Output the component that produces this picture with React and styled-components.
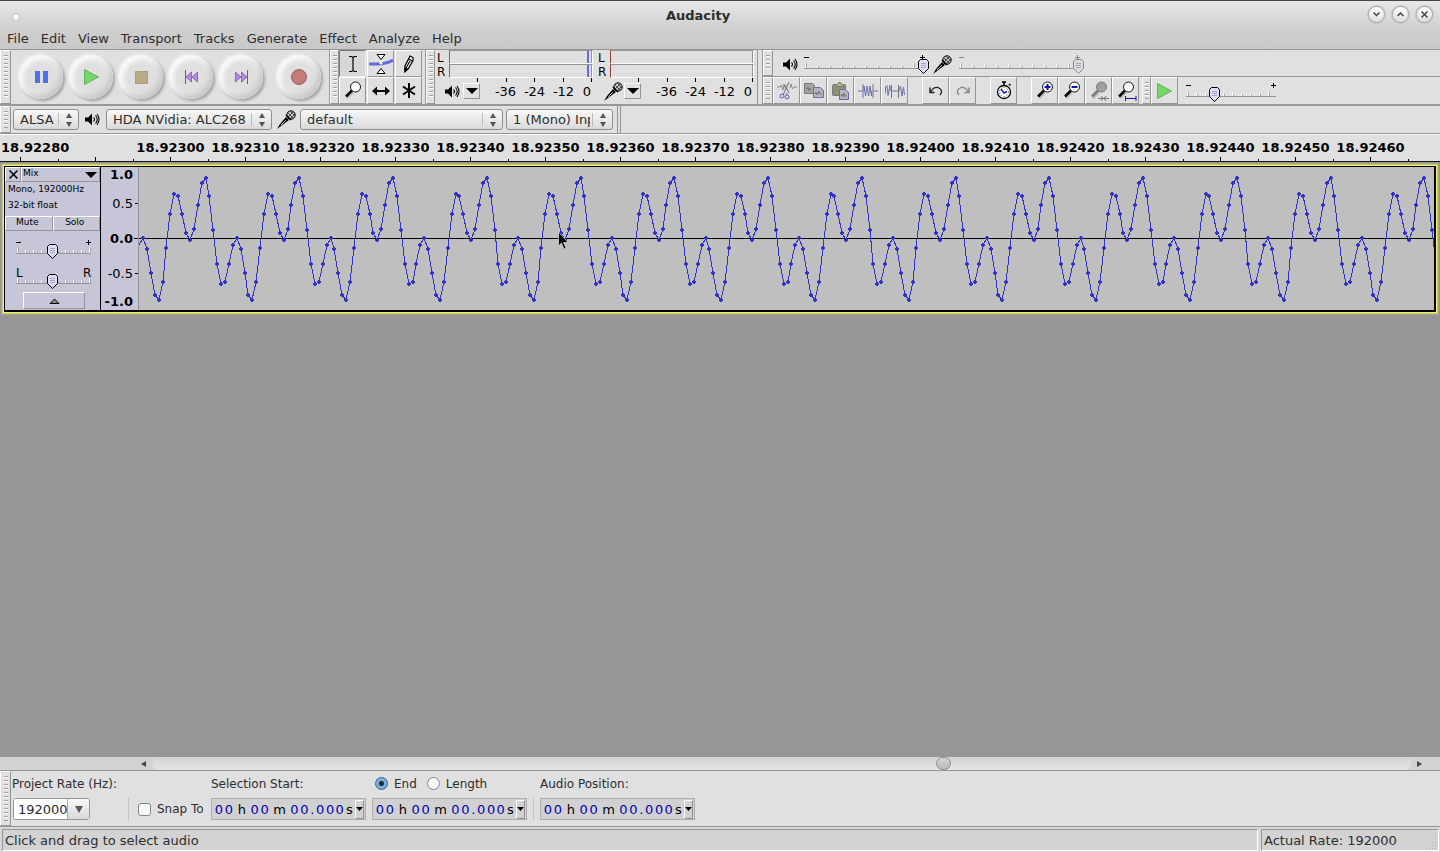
import React from "react";
import styled, { createGlobalStyle, css } from "styled-components";

const GlobalStyle = createGlobalStyle`
  * { box-sizing: border-box; }
  html, body { margin: 0; padding: 0; }
  body, button, input, select {
    font-family: "DejaVu Sans", sans-serif;
    font-size: 13px;
    color: #2d2d2d;
  }
  button { margin: 0; padding: 0; border: 0; background: none; }
  svg { display: block; flex: none; }
`;

const menus = ["File", "Edit", "View", "Transport", "Tracks", "Generate", "Effect", "Analyze", "Help"];

const times = [
  "18.92300", "18.92310", "18.92320", "18.92330", "18.92340", "18.92350",
  "18.92360", "18.92370", "18.92380", "18.92390", "18.92400", "18.92410",
  "18.92420", "18.92430", "18.92440", "18.92450", "18.92460",
];

// one period of the wave, 24 samples, as heights in the track
const period = [
  71, 82, 106, 128, 133, 115, 81, 47, 27, 29, 47, 66,
  73, 62, 38, 16, 11, 29, 63, 97, 117, 115, 97, 78,
];
const samples = Array.from({ length: 800 }, (_, i) => [
  Math.round(4 + i * 3.90625),
  period[i % 24],
]);

/* ---------- icons ---------- */

const Speaker = () => (
  <svg width="15" height="13" viewBox="0 0 15 13" fill="none" stroke="#000">
    <path d="M0 4.5h3l4-4v12l-4-4H0z" fill="#000" stroke="none" />
    <path d="M8.5 4.5q2 2 0 4M10.5 2.5q3.5 4 0 8M12 1q4 5.5 0 11" strokeWidth="1.1" />
  </svg>
);

const Mic = () => (
  <svg width="19" height="19" viewBox="0 0 19 19">
    <path d="M9 7L3 14l-3 5 4-3 8-6z" fill="#000" />
    <path d="M9 10l-5 5" stroke="#bbb" />
    <circle cx="14" cy="5" r="4.2" fill="#c4c4c4" stroke="#000" />
    <path d="M11 3l5 5M13 1l5 5M11 7l5-5M13 9l5-5" stroke="#333" strokeWidth=".8" />
    <path d="M9 5l5 5" stroke="#000" strokeWidth="1.6" />
  </svg>
);

const Magnifier = ({ sign, gray, span, blueSpan }) => (
  <svg width="24" height="24" viewBox="0 0 24 24" fill="none">
    <path d="M12 13.5l-6 6" stroke="#888" strokeWidth="2" opacity=".4" />
    <path d="M11 11.5l-6 6" stroke={gray ? "#777" : "#000"} strokeWidth="2.5" />
    <circle cx="14.5" cy="8" r="5" fill={gray ? "#a0a0a0" : "#fff"} stroke={gray ? "#777" : "#111"} />
    {sign && <path d={sign === "+" ? "M11.5 8h6M14.5 5v6" : "M11.5 8h6"} stroke="#1414a8" strokeWidth="2" />}
    {span && <path d="M11 19.5h11M14 17l2 2.5-2 2.5M19 17l-2 2.5 2 2.5" stroke="#777" />}
    {blueSpan && <path d="M11 19.5h11M11.5 17v5M22 17v5" stroke="#1414a8" />}
  </svg>
);

const IBeam = () => (
  <svg width="12" height="18" viewBox="0 0 12 18" fill="none" stroke="#000">
    <path d="M2 1.5h2.5l1.5 1 1.5-1H10M2 16.5h2.5l1.5-1 1.5 1H10M6 2v14" strokeWidth="1.2" />
  </svg>
);

const Envelope = () => (
  <svg width="24" height="22" viewBox="0 0 24 22">
    <path d="M0 11h9q8 0 15-4" stroke="#6468dc" strokeWidth="3" fill="none" />
    <circle cx="12" cy="10" r="1.5" fill="#fff" />
    <path d="M8 1.5h8l-4 5zM8 20.500h8l-4-5z" fill="#fff" stroke="#000" />
  </svg>
);

const Pencil = () => (
  <svg width="12" height="18" viewBox="0 0 12 18">
    <path d="M7 1l3 1.500v3L5 14l-3 2.500V11z" fill="#fff" stroke="#000" strokeWidth="1.2" />
    <path d="M2 16.500V13l2 1zM6 4l3 2M7 6l-4 7" stroke="#000" strokeWidth="1.2" />
  </svg>
);

const TimeShift = () => (
  <svg width="18" height="10" viewBox="0 0 18 10">
    <path d="M0 5l5-4.500v9zM18 5l-5-4.500v9z" />
    <path d="M3 5h12" stroke="#000" strokeWidth="2" />
  </svg>
);

const Star = () => (
  <svg width="14" height="15" viewBox="0 0 14 15" stroke="#000" strokeWidth="2">
    <path d="M7 0v15M1 3.5l12 8M13 3.5l-12 8" />
  </svg>
);

const Cut = () => (
  <svg width="20" height="18" viewBox="0 0 20 18" fill="none" stroke="#888">
    <path d="M0 5h3l1-2 2 5 1-6 1.500 5 1.500-3M13 6l1-4 1.500 5L17 5h3" />
    <path d="M12 0L7 11M8 3l4 8" strokeWidth="1.3" />
    <g stroke="#5e64a8">
      <circle cx="5" cy="14" r="2" />
      <circle cx="10" cy="15" r="2" />
      <path d="M7 11l-1 2M10 11v2" />
    </g>
  </svg>
);

const Copy = () => (
  <svg width="20" height="16" viewBox="0 0 20 16" fill="#a4a4a4">
    <path d="M.5.5h8l2 2v8H.5z" stroke="#777" />
    <path d="M2 6h1l1-2 1 4 1-3 1 2" fill="none" stroke="#777" />
    <path d="M9.5 4.5h7l3 3v7h-10z" fill="#b5b5bd" stroke="#676cae" />
    <path d="M11 11l1-2 1 3 2-4 1 3h2" fill="none" stroke="#777" />
  </svg>
);

const Paste = () => (
  <svg width="18" height="18" viewBox="0 0 18 18">
    <rect x=".5" y="2.5" width="13" height="11" rx="1" fill="#929074" stroke="#777" />
    <path d="M3.5 4.5v-2h2l1-2h2l1 2h2v2z" fill="#b8b68a" stroke="#777" />
    <path d="M7.5 7.5h6l3 3v7h-9z" fill="#b5b5bd" stroke="#676cae" />
    <path d="M9 14l1-2 1 3 1-4 1 3h2" fill="none" stroke="#777" />
  </svg>
);

const Trim = () => (
  <svg width="20" height="16" viewBox="0 0 20 16" fill="none" stroke="#6a70b4">
    <path d="M0 8h5M15 8h5" />
    <path d="M6 8V3l1.500 10L9 3l1.500 10L12 3l1.500 10V8" />
    <path d="M5 1v14M15 1v14" stroke="#777" />
  </svg>
);

const Silence = () => (
  <svg width="20" height="16" viewBox="0 0 20 16" fill="none" stroke="#6a70b4">
    <path d="M.5 10V4L2 2.5l1 10 2-10V8M7 8h6M14 8l1.500-5 1.500 10 1.500-9 1 8" />
    <path d="M6.5 2v13M13.5 2v13" stroke="#777" />
  </svg>
);

const Undo = ({ flip }) => (
  <svg width="14" height="11" viewBox="0 0 14 11" fill="none" stroke={flip ? "#888" : "#222"} transform={flip ? "scale(-1 1)" : undefined}>
    <path d="M2 7q2-5 7-4.500 6 2.500 2 7.500" strokeWidth="1.3" />
    <path d="M1 2.5v5h4.500" strokeWidth="1.5" />
  </svg>
);

const Timer = () => (
  <svg width="16" height="19" viewBox="0 0 16 19" fill="none" stroke="#000">
    <path d="M6 1h4M8 1v3M13 3l1.500 1.500" strokeWidth="1.5" />
    <circle cx="8" cy="11" r="6.5" fill="#fff" strokeWidth="1.3" />
    <circle cx="8" cy="11" r="4.5" strokeDasharray="1 2" strokeWidth=".8" />
    <path d="M5 8l3 4 3-1.500" stroke="#2020b0" strokeWidth="1.5" />
  </svg>
);

const PlayIcon = () => (
  <svg width="15" height="16" viewBox="0 0 15 16">
    <path d="M.5.5l14 7.500-14 7.500z" fill="#75d767" stroke="#63b358" />
  </svg>
);

const PauseIcon = () => (
  <svg width="13" height="12" viewBox="0 0 13 12" fill="#4d6ff2">
    <path d="M0 0h5v12H0zM8 0h5v12H8z" />
  </svg>
);

const StopIcon = () => (
  <svg width="13" height="13" viewBox="0 0 13 13">
    <path d="M.5.5h12v12H.5z" fill="#baab84" stroke="#ae9e78" />
  </svg>
);

const SkipIcon = ({ flip }) => (
  <svg width="13" height="14" viewBox="0 0 13 14" transform={flip ? "scale(-1 1)" : undefined}>
    <path d="M6.5 2v10L1 7zM12.5 2v10L7 7z" fill="#b48be0" stroke="#8757b5" strokeWidth=".8" />
    <path d="M.5 0v14" stroke="#71548d" />
  </svg>
);

const RecordIcon = () => (
  <svg width="16" height="16" viewBox="0 0 16 16">
    <circle cx="8" cy="8" r="7.5" fill="#c47b7b" stroke="#9b5c5c" />
  </svg>
);

const Spinner = () => (
  <svg width="6" height="16" viewBox="0 0 6 16" fill="#555">
    <path d="M0 6l3-5 3 5zM0 10l3 5 3-5z" />
  </svg>
);

const DownArrow = ({ w = 12, h = 6, fill = "#000" }) => (
  <svg width={w} height={h} viewBox="0 0 12 6" preserveAspectRatio="none" fill={fill}>
    <path d="M0 0h12L6 6z" />
  </svg>
);

/* ---------- shared parts ---------- */

const Window = styled.div`
  display: flex;
  flex-direction: column;
  min-height: 100vh;
  background: #e0e0e0;
`;

const TitleBar = styled.header`
  display: flex;
  align-items: center;
  height: 28px;
  padding: 0 7px 0 12px;
  border-top: 1px solid #45434a;
  background: linear-gradient(#e8e8e8, #d0d0d0);
`;

const Dot = styled.span`
  width: 8px;
  height: 8px;
  margin: 4px 8px 0 0;
  border: 1px solid #c2c2c2;
  border-radius: 50%;
  background: #f8f8f8;
`;

const Title = styled.h1`
  flex: 1;
  margin: 0;
  padding-top: 2px;
  font-size: 13px;
  text-align: center;
`;

const WindowButtons = styled.div`
  display: flex;
  gap: 7px;
`;

const WindowButton = styled.button`
  display: grid;
  place-items: center;
  width: 17px;
  height: 17px;
  border: 1px solid #a9a9a9;
  border-radius: 50%;
  background: linear-gradient(#fff, #dcdcdc);
  box-shadow: 0 0 0 1px #c4c4c4;
`;

const MenuBar = styled.nav`
  display: flex;
  gap: 12px;
  height: 22px;
  padding: 0 7px;
  border-bottom: 1px solid #949494;
  background: linear-gradient(#d0d0d0, #c8c8c8);
`;

const bevel = css`
  border: 1px solid;
  border-color: #fff #959595 #959595 #fff;
`;

const Grip = styled.div`
  display: flex;
  justify-content: center;
  width: ${({ $w }) => $w || 9}px;
  padding: 4px 0;
  ${bevel}
  &::after {
    content: "";
    width: 4px;
    background: repeating-linear-gradient(#a0a0a0 0 1px, #fff 1px 2px, transparent 2px 4px);
  }
`;

const Dock = styled.div`
  display: flex;
  height: 56px;
  border-bottom: 2px solid #979797;
`;

const Bar = styled.div`
  display: flex;
  border-right: ${({ $end }) => ($end ? 0 : 1)}px solid #959595;
`;

const TransportButtons = styled.div`
  display: flex;
  align-items: center;
  width: 318px;
  padding: 0 8px;
  gap: 6px;
`;

const RoundButton = styled.button`
  display: grid;
  place-items: center;
  width: 44px;
  height: 44px;
  border-radius: 50%;
  margin-left: ${({ $gap }) => $gap || 0}px;
  background: #e0e0e0;
  box-shadow:
    inset 3px 3px 4px #fafafa,
    inset -4px -4px 5px #c9c9c9,
    inset 0 0 3px 6px #e9e9e9,
    2px 2px 3px #a2a2a2,
    -1px -1px 3px #f6f6f6;
`;

const ToolGrid = styled.div`
  display: grid;
  grid-template: repeat(2, 27px) / repeat(3, 28px);
  width: 86px;
`;

const SquareButton = styled.button`
  display: grid;
  place-items: center;
  width: 27px;
  height: 27px;
  ${bevel}
  ${({ $active }) => $active && "border-color: #777 #eee #eee #777; background: #d8d8d8;"}
  margin-right: ${({ $gap }) => $gap || 0}px;
`;

/* ---------- meters ---------- */

const MeterBox = styled.div`
  width: 161px;
  padding-left: 2px;
`;

const Channel = styled.div`
  display: flex;
  height: 14px;
  line-height: 16px;
  font-size: 12px;
  color: #000;
`;

const ChannelName = styled.span`
  width: 12px;
`;

const Level = styled.div`
  display: flex;
  justify-content: flex-end;
  width: 144px;
  border: 1px solid;
  border-color: #959595 #fff #fff ${({ $color }) => $color};
  &::before {
    content: "";
    width: 2px;
    background: ${({ $peak }) => ($peak ? "#6868f4" : "transparent")};
  }
  &::after {
    content: "";
    width: 1px;
    margin-left: 2px;
    background: #959595;
  }
`;

const MeterTicks = styled.div`
  display: flex;
  justify-content: space-between;
  width: 115px;
  height: 4px;
  margin-left: 40px;
  i { width: 1px; background: #000; }
`;

const MeterScale = styled.div`
  display: flex;
  align-items: center;
  height: 18px;
  padding-left: 4px;
  color: #000;
`;

const MeterIcon = styled.span`
  display: grid;
  place-items: center;
  width: 22px;
`;

const MeterMenu = styled.button`
  display: grid;
  place-items: center;
  width: 17px;
  height: 16px;
  margin-right: 11px;
  ${bevel}
`;

const Db = styled.span`
  width: 29px;
  text-align: center;
  &:last-child { width: 18px; }
`;

const Meter = ({ label, icon, color, peak }) => (
  <MeterBox>
    <Channel><ChannelName>L</ChannelName><Level $color={color} $peak={peak} /></Channel>
    <Channel><ChannelName>R</ChannelName><Level $color={color} $peak={peak} /></Channel>
    <MeterTicks><i /><i /><i /><i /><i /></MeterTicks>
    <MeterScale>
      <MeterIcon>{icon}</MeterIcon>
      <MeterMenu aria-label={label}><DownArrow /></MeterMenu>
      <Db>-36</Db><Db>-24</Db><Db>-12</Db><Db>0</Db>
    </MeterScale>
  </MeterBox>
);

/* ---------- sliders ---------- */

const thumb = (fill, stroke) =>
  `url("data:image/svg+xml,${encodeURIComponent(
    `<svg xmlns='http://www.w3.org/2000/svg' width='11' height='15'><path d='M2.5.5h6l2 2v7l-5 5-5-5v-7z' fill='${fill}' stroke='${stroke}'/><path d='M3 4.5h5M3 6.5h5M3 8.5h5' stroke='#a4a4c0'/></svg>`
  )}")`;

const SliderBox = styled.label`
  display: grid;
  width: ${({ $w }) => $w}px;
  height: 20px;
  svg, input { grid-area: 1 / 1; }
  svg { overflow: visible; }
`;

const Range = styled.input`
  appearance: none;
  width: 100%;
  height: 15px;
  margin: 5px 0 0;
  background: none;
  &::-webkit-slider-thumb {
    appearance: none;
    width: 11px;
    height: 15px;
    background: ${({ disabled }) => (disabled ? thumb("#dcdcdc", "#888") : thumb("#dcdcf4", "#000"))};
  }
`;

const Slider = ({ label, w, step, value, disabled, left, right }) => {
  const ink = disabled ? "#888" : "#000";
  const ticks = [];
  for (let x = 5; x <= w - 5; x += step) ticks.push(x);
  return (
    <SliderBox $w={w}>
      <svg width={w} height="20">
        {ticks.map((x, i) => (
          <path key={x} d={`M${x + 0.5} ${i === 0 || i === ticks.length - 1 ? 9 : 11}V14`} stroke="#fff" />
        ))}
        {ticks.map((x, i) => (
          <path key={x} d={`M${x + 1.5} ${i === 0 || i === ticks.length - 1 ? 9 : 12}V14`} stroke="#aaa" />
        ))}
        <path d={`M4 14.500H${w - 4}`} stroke="#959595" />
        {left ? (
          <>
            <text x="4" y="8" fontSize="12">{left}</text>
            <text x={w - 12} y="8" fontSize="12">{right}</text>
          </>
        ) : (
          <path d={`M4 3.5h5M${w - 9} 3.5h5M${w - 6.5} 1v5`} stroke={ink} />
        )}
      </svg>
      <Range type="range" aria-label={label} defaultValue={value} disabled={disabled} />
    </SliderBox>
  );
};

const RightDock = styled.div`
  display: grid;
  grid-template-rows: 27px 27px;
  flex: 1;
  margin-left: 4px;
  border-left: 1px solid #959595;
`;

const MixerBar = styled(Bar)`
  align-items: stretch;
  border-bottom: 1px solid #959595;
`;

const MixerContent = styled.div`
  display: flex;
  align-items: center;
  padding: 2px 0 0 8px;
`;

const MixerIcon = styled.span`
  display: grid;
  justify-content: center;
  width: ${({ $w }) => $w}px;
`;

const PlaySpeed = styled.div`
  padding-top: 5px;
  margin-left: 4px;
`;

/* ---------- device bar ---------- */

const DeviceDock = styled.div`
  display: flex;
  height: 28px;
  border-bottom: 1px solid #959595;
`;

const Devices = styled.div`
  display: flex;
  align-items: center;
  padding: 0 4px 0 2px;
  border-right: 1px solid #959595;
`;

const DockEnd = styled.div`
  width: 3px;
  border-right: 1px solid #959595;
`;

const SelectBox = styled.label`
  display: grid;
  align-items: center;
  width: ${({ $w }) => $w}px;
  height: 21px;
  margin-right: ${({ $gap }) => $gap || 0}px;
  svg {
    grid-area: 1 / 1;
    justify-self: end;
    margin-right: 7px;
    pointer-events: none;
  }
`;

const NativeSelect = styled.select`
  grid-area: 1 / 1;
  appearance: none;
  width: 100%;
  height: 21px;
  padding: 0 22px 0 6px;
  border: 1px solid #8f8f8f;
  border-radius: 3px;
  background:
    linear-gradient(#bbb, #bbb) right 19px center / 1px 13px no-repeat,
    linear-gradient(#f8f8f8, #dadada);
`;

const DeviceIcon = styled.span`
  display: grid;
  place-items: center;
  width: ${({ $w }) => $w}px;
`;

const Select = ({ label, w, gap, children }) => (
  <SelectBox $w={w} $gap={gap}>
    <NativeSelect aria-label={label}><option>{children}</option></NativeSelect>
    <Spinner />
  </SelectBox>
);

/* ---------- ruler and track ---------- */

const Ruler = styled.div`
  display: flex;
  height: 28px;
  overflow: hidden;
  padding-top: 5px;
  border-top: 1px solid #fff;
  border-bottom: 1px solid #111;
  background:
    linear-gradient(90deg, #000 1px, transparent 1px) 20px 100% / 75px 4px repeat-x,
    linear-gradient(90deg, #000 1px, transparent 1px) 58px 100% / 75px 2px repeat-x,
    #e0e0e0;
  color: #000;
  font-weight: bold;
`;

const RulerLabel = styled.span`
  flex: none;
  width: 75px;
  text-align: center;
  &:first-child {
    width: 133px;
    padding-left: 1px;
    text-align: left;
  }
`;

const Workspace = styled.main`
  flex: 1;
  padding: 4px 4px 0;
  background: #969696;
`;

const Track = styled.section`
  display: flex;
  height: 146px;
  border: solid #000;
  border-width: 1px 2px 2px 1px;
  box-shadow: 0 0 0 1px #f2f26c, 0 0 0 2px #c6c673, 0 0 0 3px #a5a58a;
`;

const TrackPanel = styled.div`
  width: 96px;
  border-right: 1px solid #000;
  background: #c6c6d8;
  color: #000;
  font-size: 9px;
`;

const TrackHead = styled.div`
  display: flex;
  height: 15px;
`;

const PanelButton = styled.button`
  display: flex;
  align-items: center;
  justify-content: ${({ $between }) => ($between ? "space-between" : "center")};
  flex: ${({ $w }) => ($w ? "none" : 1)};
  width: ${({ $w }) => $w || 0}px;
  height: 15px;
  padding: 0 ${({ $between }) => ($between ? 2 : 0)}px;
  color: #000;
  font-size: 9px;
  ${bevel}
  span { padding: 0 2px 4px 0; margin-left: -1px; }
`;

const TrackInfo = styled.p`
  height: 35px;
  margin: -1px 0 0;
  padding-left: 3px;
  line-height: 16px;
`;

const TrackSliders = styled.div`
  display: flex;
  flex-direction: column;
  align-items: center;
  gap: 10px;
  padding: 8px 0 3px 1px;
`;

const Collapse = styled.button`
  display: grid;
  place-items: center;
  width: 62px;
  height: 17px;
  margin-left: 18px;
  ${bevel}
`;

const VRuler = styled.div`
  display: grid;
  grid-template-rows: 14px 45px 25px 44px 12px;
  align-items: center;
  justify-items: end;
  width: 38px;
  padding-right: 5px;
  border-right: 1px solid #959595;
  background:
    linear-gradient(#000, #000) 100% 36px / 3px 1px no-repeat,
    linear-gradient(#000, #000) 100% 71px / 4px 1px no-repeat,
    linear-gradient(#000, #000) 100% 106px / 3px 1px no-repeat,
    #c6c6d8;
  color: #000;
`;

const WaveBox = styled.div`
  position: relative;
  flex: 1;
  min-width: 0;
  overflow: hidden;
  background: #bfbfbf;
`;

const Cursor = styled.svg`
  position: absolute;
  left: 419px;
  top: 64px;
`;

const Wave = () => (
  <WaveBox>
    <svg width="3130" height="143" shapeRendering="crispEdges">
      <path d="M0 71.500H3130" stroke="#000" />
      <path d={`M0 78L${samples.map(([x, y]) => `${x} ${y}`).join("L")}`} fill="none" stroke="#3232c8" />
      {samples.map(([x, y]) => (
        <path key={x} d={`M${x - 2} ${y - 1}h4v2h-4zM${x - 1} ${y - 2}h2v4h-2z`} fill="#3232c8" />
      ))}
    </svg>
    <Cursor width="12" height="19" viewBox="0 0 12 19">
      <path d="M.5 1v14l3-3 2.500 6 2-1-2.500-5.500H10z" fill="#000" stroke="#eee" strokeWidth=".6" />
    </Cursor>
  </WaveBox>
);

/* ---------- bottom ---------- */

const ScrollRow = styled.div`
  display: flex;
  align-items: center;
  height: 14px;
  padding: 0 15px 0 138px;
  border-bottom: 1px solid #959595;
  background: #d2d2d2;
`;

const ScrollButton = styled.button`
  display: grid;
  place-items: center;
  width: 11px;
  height: 13px;
`;

const ScrollTrack = styled.input`
  appearance: none;
  flex: 1;
  height: 13px;
  margin: 0 3px;
  border-radius: 6px;
  background: linear-gradient(#d3d3d3, #e6e6e6);
  &::-webkit-slider-thumb {
    appearance: none;
    width: 15px;
    height: 13px;
    border: 1px solid #8c8c8c;
    border-radius: 7px;
    background: linear-gradient(#d4d4d4, #b8b8b8);
  }
`;

const SelectionBar = styled.div`
  display: flex;
  height: 56px;
  border-bottom: 1px solid #959595;
  font-size: 12px;
`;

const Column = styled.div`
  display: grid;
  grid-template-rows: 25px 26px;
  align-items: center;
  align-content: start;
  justify-items: start;
  width: ${({ $w }) => $w}px;
`;

const Inline = styled.div`
  display: flex;
  align-items: center;
`;

const RateLabel = styled.label`
  padding-left: 1px;
`;

const Combo = styled.div`
  display: flex;
  width: 77px;
  height: 22px;
  margin-left: 2px;
  border: 1px solid #949494;
  border-radius: 3px;
  background: #fff;
  overflow: hidden;
  input {
    width: 53px;
    padding: 0 0 0 4px;
    border: 0;
  }
  button {
    display: grid;
    place-items: center;
    flex: 1;
    border-left: 1px solid #aaa;
    background: linear-gradient(#f8f8f8, #dadada);
  }
`;

const Divider = styled.span`
  width: 1px;
  height: 22px;
  margin-right: ${({ $gap }) => $gap || 0}px;
  background: #c4c4c4;
`;

const Choice = styled.label`
  display: flex;
  align-items: center;
  gap: 6px;
  margin: 0 ${({ $gap }) => $gap || 0}px 0 3px;
`;

const Tick = styled.input`
  appearance: none;
  width: 13px;
  height: 13px;
  margin: 0;
  border: 1px solid #858585;
  border-radius: ${({ type }) => (type === "radio" ? "50%" : "3px")};
  background: #f8f8f8;
  &:checked {
    border-color: #3d6185;
    background: radial-gradient(#1b2a38 0 2px, #79aede 3px);
  }
`;

const TimeField = styled.div`
  display: flex;
  align-items: center;
  width: 155px;
  height: 22px;
  padding: 0 1px 0 2px;
  border: 1px solid #aeaeae;
  background: #d1d1d1;
  color: #000;
  font-size: 13px;
`;

const Unit = styled.span`
  width: ${({ $w }) => $w}px;
  text-align: center;
`;

const Digit = styled(Unit)`
  color: #0000b4;
`;

const TimeMenu = styled.button`
  display: grid;
  place-items: center;
  width: 9px;
  height: 19px;
  ${bevel}
`;

const TimeControl = ({ label }) => (
  <TimeField role="group" aria-label={label}>
    <Digit $w={10}>0</Digit><Digit $w={10}>0</Digit>
    <Unit $w={16}>h</Unit>
    <Digit $w={10}>0</Digit><Digit $w={10}>0</Digit>
    <Unit $w={20}>m</Unit>
    <Digit $w={10}>0</Digit><Digit $w={10}>0</Digit><Digit $w={6}>.</Digit>
    <Digit $w={10}>0</Digit><Digit $w={10}>0</Digit><Digit $w={9}>0</Digit>
    <Unit $w={11}>s</Unit>
    <TimeMenu aria-label={`${label} format`}><DownArrow w={7} h={4} /></TimeMenu>
  </TimeField>
);

const StatusBar = styled.footer`
  display: flex;
  gap: 3px;
  height: 25px;
  padding: 2px 1px 1px 2px;
  background: #d8d8d8;
`;

const Status = styled.div`
  display: flex;
  align-items: center;
  justify-content: space-between;
  flex: ${({ $w }) => ($w ? "none" : 1)};
  width: ${({ $w }) => $w || 0}px;
  padding-left: 2px;
  border: 1px solid;
  border-color: #959595 #fff #fff #959595;
  background: #d3d3d3;
`;

const ResizeGrip = () => (
  <svg width="12" height="20" viewBox="0 0 12 20" stroke="#b4b4b4" strokeWidth="1" strokeDasharray="1 2">
    <path d="M0 18.500h12M3 15.500h9M6 12.500h6M9 9.500h3" />
  </svg>
);

const App = () => {
  return (
    <Window>
      <GlobalStyle />
      <TitleBar>
        <Dot />
        <Title>Audacity</Title>
        <WindowButtons>
          <WindowButton aria-label="Minimize">
            <svg width="7" height="5" fill="none" stroke="#444" strokeWidth="1.5"><path d="M.5.5l3 3 3-3" /></svg>
          </WindowButton>
          <WindowButton aria-label="Maximize">
            <svg width="7" height="5" fill="none" stroke="#444" strokeWidth="1.5"><path d="M.5 4l3-3 3 3" /></svg>
          </WindowButton>
          <WindowButton aria-label="Close">
            <svg width="7" height="7" fill="none" stroke="#444" strokeWidth="1.5"><path d="M.5.5l6 6M6.5.5l-6 6" /></svg>
          </WindowButton>
        </WindowButtons>
      </TitleBar>
      <MenuBar>
        {menus.map((menu) => <button key={menu}>{menu}</button>)}
      </MenuBar>

      <Dock>
        <Bar>
          <Grip $w={11} />
          <TransportButtons>
            <RoundButton aria-label="Pause"><PauseIcon /></RoundButton>
            <RoundButton aria-label="Play"><PlayIcon /></RoundButton>
            <RoundButton aria-label="Stop"><StopIcon /></RoundButton>
            <RoundButton aria-label="Skip to start"><SkipIcon /></RoundButton>
            <RoundButton aria-label="Skip to end"><SkipIcon flip /></RoundButton>
            <RoundButton aria-label="Record" $gap={8}><RecordIcon /></RoundButton>
          </TransportButtons>
        </Bar>
        <Bar>
          <Grip />
          <ToolGrid>
            <SquareButton aria-label="Selection" $active><IBeam /></SquareButton>
            <SquareButton aria-label="Envelope"><Envelope /></SquareButton>
            <SquareButton aria-label="Draw"><Pencil /></SquareButton>
            <SquareButton aria-label="Zoom"><Magnifier /></SquareButton>
            <SquareButton aria-label="Time shift"><TimeShift /></SquareButton>
            <SquareButton aria-label="Multi"><Star /></SquareButton>
          </ToolGrid>
        </Bar>
        <Bar>
          <Grip />
          <Meter label="Playback meter" icon={<Speaker />} color="#22a022" peak />
          <Meter label="Recording meter" icon={<Mic />} color="#963c3c" />
        </Bar>
        <RightDock>
          <MixerBar $end>
            <Grip $w={10} />
            <MixerContent>
              <MixerIcon $w={19}><Speaker /></MixerIcon>
              <Slider label="Output volume" w={129} step={12} value={100} />
              <MixerIcon $w={26}><Mic /></MixerIcon>
              <Slider label="Input volume" w={129} step={12} value={100} disabled />
            </MixerContent>
          </MixerBar>
          <Bar $end>
            <Grip $w={10} />
            <SquareButton aria-label="Cut"><Cut /></SquareButton>
            <SquareButton aria-label="Copy"><Copy /></SquareButton>
            <SquareButton aria-label="Paste"><Paste /></SquareButton>
            <SquareButton aria-label="Trim"><Trim /></SquareButton>
            <SquareButton aria-label="Silence" $gap={14}><Silence /></SquareButton>
            <SquareButton aria-label="Undo"><Undo /></SquareButton>
            <SquareButton aria-label="Redo" $gap={14}><Undo flip /></SquareButton>
            <SquareButton aria-label="Timer" $gap={14}><Timer /></SquareButton>
            <SquareButton aria-label="Zoom in"><Magnifier sign="+" /></SquareButton>
            <SquareButton aria-label="Zoom out"><Magnifier sign="-" /></SquareButton>
            <SquareButton aria-label="Fit selection"><Magnifier gray span /></SquareButton>
            <SquareButton aria-label="Fit project" $gap={3}><Magnifier blueSpan /></SquareButton>
            <Grip />
            <SquareButton aria-label="Play at speed"><PlayIcon /></SquareButton>
            <PlaySpeed><Slider label="Playback speed" w={98} step={9} value={31} /></PlaySpeed>
          </Bar>
        </RightDock>
      </Dock>

      <DeviceDock>
        <Grip $w={11} />
        <Devices>
          <Select label="Audio host" w={66}>ALSA</Select>
          <DeviceIcon $w={27}><Speaker /></DeviceIcon>
          <Select label="Output device" w={166}>HDA NVidia: ALC268</Select>
          <DeviceIcon $w={28}><Mic /></DeviceIcon>
          <Select label="Input device" w={203} gap={3}>default</Select>
          <Select label="Input channels" w={107}>1 (Mono) Input Channel</Select>
        </Devices>
        <DockEnd />
      </DeviceDock>

      <Ruler>
        <RulerLabel>18.92280</RulerLabel>
        {times.map((time) => <RulerLabel key={time}>{time}</RulerLabel>)}
      </Ruler>

      <Workspace>
        <Track>
          <TrackPanel>
            <TrackHead>
              <PanelButton $w={16} aria-label="Close track">
                <svg width="9" height="9" stroke="#000" strokeWidth="1.5"><path d="M.5.5l8 8M8.5.5l-8 8" /></svg>
              </PanelButton>
              <PanelButton $between><span>Mix</span><DownArrow /></PanelButton>
            </TrackHead>
            <TrackInfo>Mono, 192000Hz<br />32-bit float</TrackInfo>
            <TrackHead>
              <PanelButton><span>Mute</span></PanelButton>
              <PanelButton><span>Solo</span></PanelButton>
            </TrackHead>
            <TrackSliders>
              <Slider label="Gain" w={83} step={8} value={49} />
              <Slider label="Pan" w={83} step={8} value={49} left="L" right="R" />
            </TrackSliders>
            <Collapse aria-label="Collapse track">
              <svg width="11" height="6" fill="#888" stroke="#000"><path d="M1 5.500L5.500 1 10 5.500z" /></svg>
            </Collapse>
          </TrackPanel>
          <VRuler>
            <b>1.0</b><span>0.5</span><b>0.0</b><span>-0.5</span><b>-1.0</b>
          </VRuler>
          <Wave />
        </Track>
      </Workspace>

      <ScrollRow>
        <ScrollButton aria-label="Scroll left">
          <svg width="5" height="6" fill="#444"><path d="M5 0v6L0 3z" /></svg>
        </ScrollButton>
        <ScrollTrack type="range" aria-label="Scroll position" defaultValue={63} />
        <ScrollButton aria-label="Scroll right">
          <svg width="5" height="6" fill="#444"><path d="M0 0v6l5-3z" /></svg>
        </ScrollButton>
      </ScrollRow>

      <SelectionBar>
        <Grip $w={11} />
        <Column $w={117}>
          <RateLabel htmlFor="rate">Project Rate (Hz):</RateLabel>
          <Combo>
            <input id="rate" defaultValue="192000" />
            <button aria-label="Choose rate"><DownArrow w={8} h={7} fill="#555" /></button>
          </Combo>
        </Column>
        <Column $w={83}>
          <span />
          <Inline>
            <Divider $gap={6} />
            <Choice><Tick type="checkbox" />Snap To</Choice>
          </Inline>
        </Column>
        <Column $w={161}>
          <span>Selection Start:</span>
          <TimeControl label="Selection start" />
        </Column>
        <Column $w={161}>
          <Inline>
            <Choice $gap={7}><Tick type="radio" name="range" defaultChecked />End</Choice>
            <Choice><Tick type="radio" name="range" />Length</Choice>
          </Inline>
          <TimeControl label="Selection end" />
        </Column>
        <Column $w={7}>
          <span />
          <Divider />
        </Column>
        <Column $w={161}>
          <span>Audio Position:</span>
          <TimeControl label="Audio position" />
        </Column>
      </SelectionBar>

      <StatusBar>
        <Status>Click and drag to select audio</Status>
        <Status $w={178}>Actual Rate: 192000<ResizeGrip /></Status>
      </StatusBar>
    </Window>
  );
};

export default App;
